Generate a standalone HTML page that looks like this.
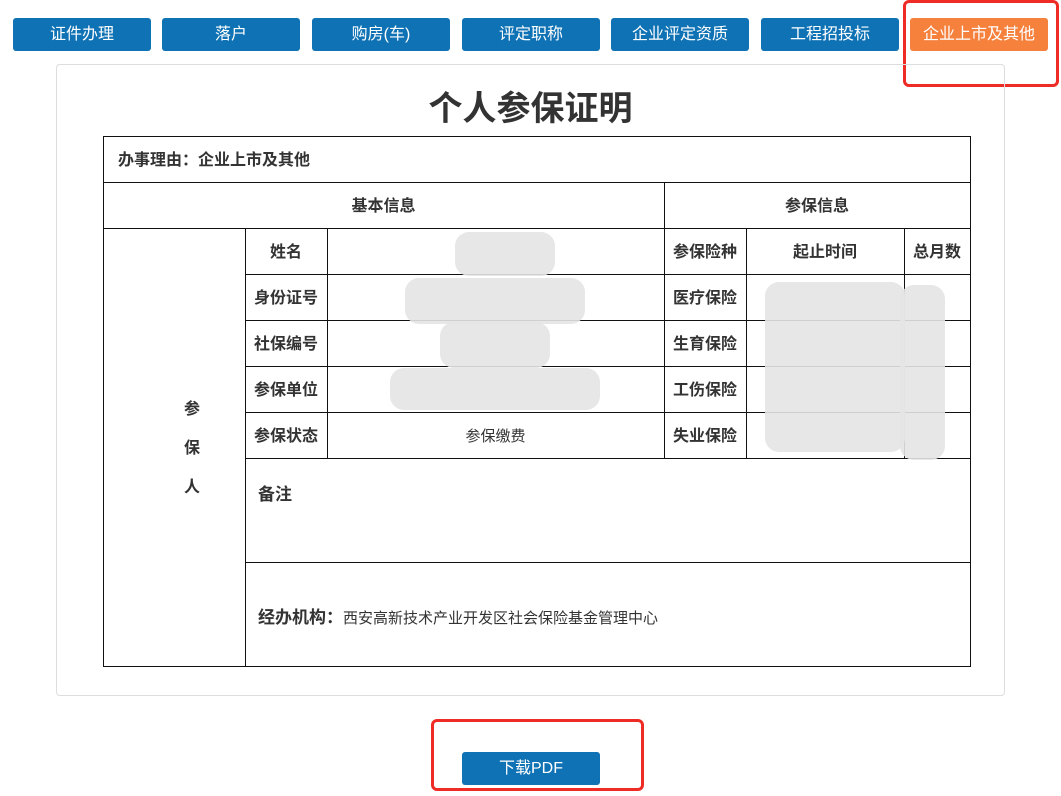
<!DOCTYPE html>
<html><head><meta charset="utf-8"><style>
*{margin:0;padding:0;box-sizing:border-box}
body{width:1061px;height:796px;background:#fff;position:relative;overflow:hidden;font-family:"Liberation Sans","Noto Sans CJK SC",sans-serif;color:#333}
.b{position:absolute;top:18px;height:33px;width:138px;background:#0f72b4;color:#fff;border-radius:3px;font-size:16px;text-align:center;line-height:33px}
.card{position:absolute;left:56px;top:64px;width:949px;height:632px;border:1px solid #ddd;border-radius:4px}
.t{position:absolute;left:0;width:1061px;top:86px;text-align:center;font-size:34px;font-weight:bold;color:#333;line-height:46px}
.h{position:absolute;background:#111}
.c{position:absolute;font-size:16px;font-weight:bold;color:#333;text-align:center;line-height:46px;padding-top:2px}
.bl{position:absolute;background:#e4e4e6;border-radius:14px;opacity:.9}
.r{position:absolute;border:3px solid #ee2b25;border-radius:6px}
</style></head><body>
<div class="b" style="left:13px">证件办理</div>
<div class="b" style="left:162px">落户</div>
<div class="b" style="left:312px">购房(车)</div>
<div class="b" style="left:462px">评定职称</div>
<div class="b" style="left:611px">企业评定资质</div>
<div class="b" style="left:761px">工程招投标</div>
<div class="b" style="left:910px;background:#f6813d">企业上市及其他</div>
<div class="r" style="left:903px;top:0;width:156px;height:87px"></div>
<div class="card"></div>
<div class="t">个人参保证明</div>
<div class="h" style="left:103px;top:136px;width:868px;height:1px"></div>
<div class="h" style="left:103px;top:182px;width:868px;height:1px"></div>
<div class="h" style="left:103px;top:228px;width:868px;height:1px"></div>
<div class="h" style="left:245px;top:274px;width:726px;height:1px"></div>
<div class="h" style="left:245px;top:320px;width:726px;height:1px"></div>
<div class="h" style="left:245px;top:366px;width:726px;height:1px"></div>
<div class="h" style="left:245px;top:412px;width:726px;height:1px"></div>
<div class="h" style="left:245px;top:458px;width:726px;height:1px"></div>
<div class="h" style="left:245px;top:562px;width:726px;height:1px"></div>
<div class="h" style="left:103px;top:666px;width:868px;height:1px"></div>
<div class="h" style="left:103px;top:136px;width:1px;height:531px"></div>
<div class="h" style="left:970px;top:136px;width:1px;height:531px"></div>
<div class="h" style="left:245px;top:228px;width:1px;height:439px"></div>
<div class="h" style="left:327px;top:228px;width:1px;height:231px"></div>
<div class="h" style="left:664px;top:182px;width:1px;height:277px"></div>
<div class="h" style="left:746px;top:228px;width:1px;height:231px"></div>
<div class="h" style="left:904px;top:228px;width:1px;height:231px"></div>
<div class="c" style="left:118px;top:136px;text-align:left">办事理由：企业上市及其他</div>
<div class="c" style="left:103px;top:182px;width:561px">基本信息</div>
<div class="c" style="left:664px;top:182px;width:306px">参保信息</div>
<div class="c" style="left:122px;top:388px;width:142px;line-height:39px;text-align:left;padding-left:62px">参<br>保<br>人</div>
<div class="c" style="left:245px;top:228px;width:82px">姓名</div>
<div class="c" style="left:245px;top:274px;width:82px">身份证号</div>
<div class="c" style="left:245px;top:320px;width:82px">社保编号</div>
<div class="c" style="left:245px;top:366px;width:82px">参保单位</div>
<div class="c" style="left:245px;top:412px;width:82px">参保状态</div>
<div class="c" style="left:327px;top:412px;width:337px;font-weight:normal;font-size:15px">参保缴费</div>
<div class="c" style="left:664px;top:228px;width:82px">参保险种</div>
<div class="c" style="left:746px;top:228px;width:158px">起止时间</div>
<div class="c" style="left:904px;top:228px;width:66px">总月数</div>
<div class="c" style="left:664px;top:274px;width:82px">医疗保险</div>
<div class="c" style="left:664px;top:320px;width:82px">生育保险</div>
<div class="c" style="left:664px;top:366px;width:82px">工伤保险</div>
<div class="c" style="left:664px;top:412px;width:82px">失业保险</div>
<div class="c" style="left:258px;top:470px;text-align:left;font-size:17px">备注</div>
<div class="c" style="left:258px;top:593px;text-align:left;font-size:17px">经办机构：<span style="font-weight:normal;font-size:15px">西安高新技术产业开发区社会保险基金管理中心</span></div>
<div class="bl" style="left:455px;top:232px;width:100px;height:44px"></div>
<div class="bl" style="left:405px;top:278px;width:180px;height:46px"></div>
<div class="bl" style="left:440px;top:322px;width:110px;height:46px"></div>
<div class="bl" style="left:390px;top:368px;width:210px;height:42px"></div>
<div class="bl" style="left:765px;top:282px;width:140px;height:170px"></div>
<div class="bl" style="left:900px;top:285px;width:45px;height:175px"></div>
<div class="r" style="left:431px;top:719px;width:213px;height:72px"></div>
<div class="b" style="left:462px;top:752px">下载PDF</div>
</body></html>
